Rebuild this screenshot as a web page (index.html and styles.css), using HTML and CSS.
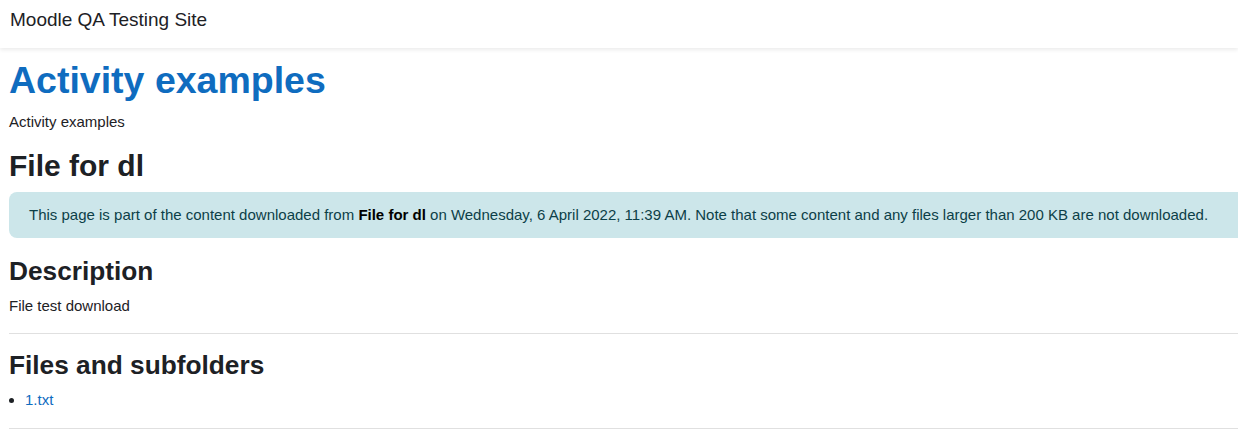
FILE: index.html
```html
<!DOCTYPE html>
<html lang="en">
<head>
<meta charset="utf-8">
<title>File for dl</title>
<link rel="stylesheet" href="styles.css">
</head>
<body>
<nav class="navbar">
  <span class="brand">Moodle QA Testing Site</span>
</nav>
<div class="page">
  <h1 class="site-title">Activity examples</h1>
  <p class="summary">Activity examples</p>
  <h2 class="activity-title">File for dl</h2>
  <div class="alert-info">This page is part of the content downloaded from <strong>File for dl</strong> on Wednesday, 6 April 2022, 11:39 AM. Note that some content and any files larger than 200 KB are not downloaded.</div>
  <h3 class="section-title">Description</h3>
  <p class="text">File test download</p>
  <hr class="divider">
  <h3 class="section-title">Files and subfolders</h3>
  <ul class="file-list">
    <li><a class="file-link" href="#">1.txt</a></li>
  </ul>
  <hr class="divider">
</div>
</body>
</html>
```
FILE: styles.css
```css
html, body {
  overflow-x: hidden;
}
body {
  margin: 0;
  font-family: "Liberation Sans", Arial, sans-serif;
  font-size: 15px;
  line-height: 1.5;
  color: #1d2125;
  background: #fff;
}
.navbar {
  height: 48px;
  box-sizing: border-box;
  display: flex;
  align-items: flex-start;
  padding: 9px 10px 0;
  background: #fff;
  box-shadow: 0 2px 4px rgba(0, 0, 0, 0.08);
  position: relative;
}
.brand {
  font-size: 19px;
  color: #1d2125;
  line-height: 1.2;
}
.page {
  padding: 10px 0 0 9px;
  margin-right: -20px;
}
h1, h2, h3 {
  font-weight: 700;
  line-height: 1.2;
  margin: 0 0 7.5px;
}
.site-title {
  font-size: 37.5px;
  color: #0f6cbf;
}
.summary, .text {
  margin: 0 0 15px;
}
.activity-title {
  font-size: 30px;
}
.alert-info {
  background: #cce6ea;
  color: #0c3f48;
  padding: 12px 20px;
  border-radius: 8px;
  margin-bottom: 17.5px;
}
.alert-info strong {
  color: #000;
  font-weight: 700;
}
.section-title {
  font-size: 26.25px;
}
.divider {
  border: 0;
  border-top: 1px solid rgba(0, 0, 0, 0.12);
  margin: 16px 0;
}
.file-list {
  margin: 1px 0 15px;
  padding-left: 16px;
}
.file-link {
  color: #0f6cbf;
  text-decoration: none;
}
```
